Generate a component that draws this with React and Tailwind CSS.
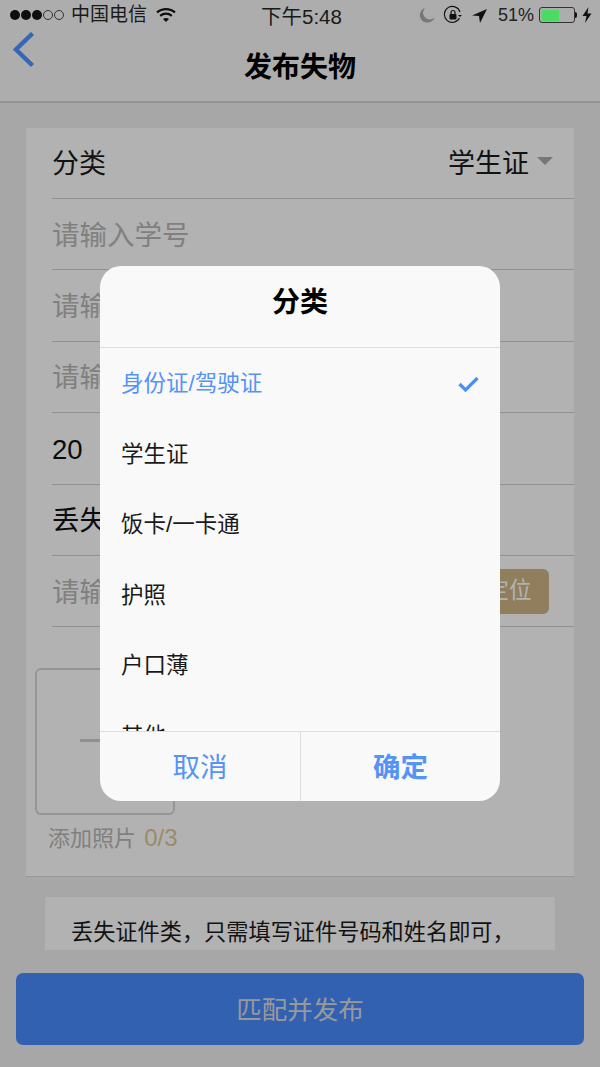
import { useState } from "react";

const cjk = "font-['Liberation_Sans','Noto_Sans_CJK_SC',sans-serif]";

function StatusBar() {
    return (
        <div className="relative z-10 h-[30px] flex items-center justify-between pl-[10px] pr-[8px] text-[19px] text-[#1a1a1a]">
            <div className="flex items-center">
                <div className="flex items-center gap-[1px]">
                    {[0, 1, 2].map((i) => <span key={i} className="w-[10px] h-[10px] rounded-full bg-[#0e0e0e]" />)}
                    {[3, 4].map((i) => <span key={i} className="w-[10px] h-[10px] rounded-full border border-[#333]" />)}
                </div>
                <span className="ml-[7px]">中国电信</span>
                <svg className="ml-[9px]" width="20" height="16" viewBox="0 0 20 16" fill="none">
                    <path d="M1 5.5C6 1 14 1 19 5.5" stroke="#0e0e0e" strokeWidth="2.2" />
                    <path d="M4.2 8.8C7.5 6 12.5 6 15.8 8.8" stroke="#0e0e0e" strokeWidth="2.2" />
                    <path d="M7 12C8.7 10.6 11.3 10.6 13 12L10 15Z" fill="#0e0e0e" />
                </svg>
            </div>
            <span className="absolute left-[261px] top-[2px] text-[20.5px]">下午5:48</span>
            <div className="flex items-center">
                <svg width="16" height="16" viewBox="0 0 16 16"><path d="M6 1A7.5 7.5 0 1 0 15.5 10.5 6.5 6.5 0 0 1 6 1Z" fill="#777" /></svg>
                <svg className="ml-[8px]" width="20" height="20" viewBox="0 0 20 20" fill="none">
                    <path d="M16.5 13A8 8 0 1 1 17 7" stroke="#111" strokeWidth="1.1" />
                    <path d="M15 10h4l-2 2Z" fill="#111" />
                    <rect x="6.5" y="9" width="7" height="5.5" rx="1" fill="#111" />
                    <path d="M8 9V7.5a2 2 0 0 1 4 0V9" stroke="#111" strokeWidth="1.2" />
                </svg>
                <svg className="ml-[9px]" width="15" height="15" viewBox="0 0 15 15"><path d="M15 1L0 7.5L7 8L8 15Z" fill="#111" /></svg>
                <span className="ml-[11px] text-[18px] text-[#222]">51%</span>
                <div className="ml-[5px] w-[36px] h-[16px] border border-[#333] rounded-[3px] p-[1.5px]">
                    <div className="w-[17px] h-full bg-[#4cd964]" />
                </div>
                <span className="w-[2px] h-[6px] bg-[#111] rounded-r-sm" />
                <svg className="ml-[5px]" width="10" height="16" viewBox="0 0 10 16"><path d="M6.5 0L0.5 9H4.5L3 16L9.5 6.5H5.5Z" fill="#111" /></svg>
            </div>
        </div>
    );
}

function Row({ children }) {
    return (
        <div className="h-[71.4px] ml-[26px] pt-[2px] flex items-center border-b border-[#cfcfcf] text-[27.5px]">
            {children}
        </div>
    );
}

export default function App() {
    const [selected] = useState("身份证/驾驶证");
    const options = ["身份证/驾驶证", "学生证", "饭卡/一卡通", "护照", "户口薄", "其他"];

    return (
        <div className={`relative w-[600px] h-[1067px] overflow-hidden bg-[#efefef] ${cjk}`}>
            {/* page */}
            <div className="h-[103px] bg-[#f8f8f8] border-b-2 border-[#d4d4d4]">
                <StatusBar />
                <div className="relative h-[71px] flex items-center justify-center">
                    <svg className="absolute left-[13px] top-[2px]" width="22" height="36" viewBox="0 0 22 36" fill="none">
                        <path d="M19.5 1.5L3 17.5L19.5 33.5" stroke="#4f94ff" strokeWidth="4.4" />
                    </svg>
                    <h1 className="text-[28px] font-bold text-black mt-[4px]">发布失物</h1>
                </div>
            </div>

            <div className="mx-[26px] mt-[25px] h-[749px] bg-white border-b border-[#d9d9d9]">
                <div className="h-[71px] ml-[26px] pt-[3px] flex items-center justify-between border-b border-[#cfcfcf] text-[27px] text-[#1a1a1a]">
                    <span>分类</span>
                    <div className="flex items-center">
                        <span className="text-[27px]">学生证</span>
                        <span className="ml-[8px] mb-[8px] mr-[21px] w-0 h-0 border-x-[8px] border-x-transparent border-t-[8px] border-t-[#aaa]" />
                    </div>
                </div>
                <Row><span className="text-[#b8b8b8]">请输入学号</span></Row>
                <Row><span className="text-[#b8b8b8]">请输入姓名</span></Row>
                <Row><span className="text-[#b8b8b8]">请输入手机</span></Row>
                <Row><span className="text-[#111]">20</span></Row>
                <Row><span className="text-[#111]">丢失时间</span></Row>
                <div className="h-[71.4px] ml-[26px] flex items-center justify-between border-b border-[#cfcfcf] text-[27.5px]">
                    <span className="text-[#b8b8b8] pt-[2px]">请输入地点</span>
                    <span className="mr-[25px] w-[80px] h-[45px] rounded-[6px] bg-[#cfb585] text-[#ffffff] text-[22.5px] flex items-center justify-center">定位</span>
                </div>
                <div className="ml-[9px] mt-[41px] w-[140px] h-[147px] border-2 border-[#d6d6d6] rounded-[6px] flex items-center justify-center">
                    <span className="w-[50px] h-[3px] mb-[2px] bg-[#cfcfcf]" />
                </div>
                <p className="ml-[22px] mt-[5px] text-[22px] text-[#b8b8b8]">添加照片 <span className="ml-[2px] text-[24px] text-[#dfc897]">0/3</span></p>
            </div>

            <div className="mx-[45px] mt-[20px] h-[53px] bg-white rounded-t-[3px] pl-[26px] pt-[19px] text-[22.2px] text-[#1a1a1a] whitespace-nowrap overflow-hidden">
                丢失证件类，只需填写证件号码和姓名即可，
            </div>

            <div className="mx-[16px] mt-[23px] h-[72px] rounded-[7px] bg-[#488bff] flex items-center justify-center pt-[2px] text-[25.5px] text-[#dcdcdc]">
                匹配并发布
            </div>

            {/* dim layer */}
            <div className="absolute inset-0 bg-black/30" />

            {/* picker dialog */}
            <div className="absolute left-[100px] top-[266px] w-[400px] h-[535px] rounded-[21px] bg-[#f9f9f9] flex flex-col overflow-hidden">
                <div className="h-[82px] shrink-0 pb-[8px] border-b border-[#dedede] flex items-center justify-center text-[28px] font-bold text-black">分类</div>
                <div className="flex-1 overflow-hidden">
                    {options.map((o) => (
                        <div key={o} className={`h-[70.5px] shrink-0 pt-[2px] pl-[21px] pr-[21px] flex items-center justify-between text-[22.5px] ${o === selected ? "text-[#5593f7]" : "text-[#1a1a1a]"}`}>
                            <span>{o}</span>
                            {o === selected && (
                                <svg width="21" height="16" viewBox="0 0 21 16" fill="none">
                                    <path d="M1.5 8L7.5 14L19.5 2" stroke="#4a8ef8" strokeWidth="3.2" />
                                </svg>
                            )}
                        </div>
                    ))}
                </div>
                <div className="h-[70px] shrink-0 border-t border-[#dedede] flex text-[27.5px] text-[#5593f7]">
                    <div className="w-[201px] pt-[3px] border-r border-[#dedede] flex items-center justify-center">取消</div>
                    <div className="flex-1 pt-[3px] flex items-center justify-center font-bold">确定</div>
                </div>
            </div>
        </div>
    );
}
